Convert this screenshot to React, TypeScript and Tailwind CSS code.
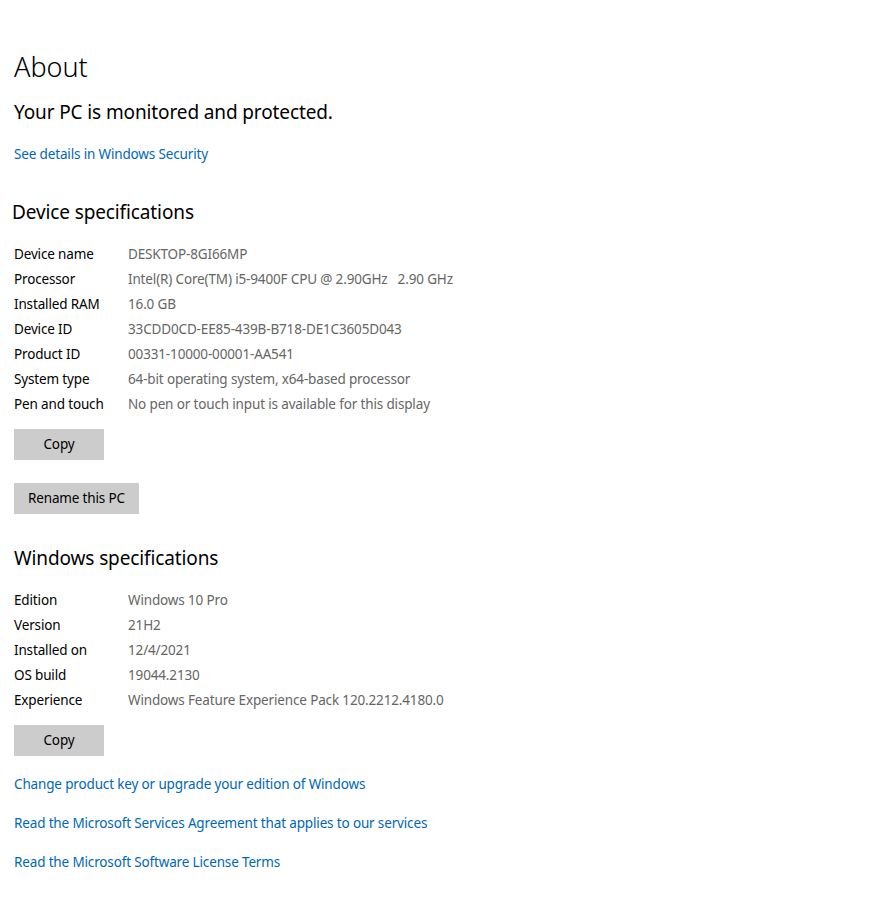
const deviceSpecs = [
  ['Device name', 'DESKTOP-8GI66MP'],
  ['Processor', 'Intel(R) Core(TM) i5-9400F CPU @ 2.90GHz   2.90 GHz'],
  ['Installed RAM', '16.0 GB'],
  ['Device ID', '33CDD0CD-EE85-439B-B718-DE1C3605D043'],
  ['Product ID', '00331-10000-00001-AA541'],
  ['System type', '64-bit operating system, x64-based processor'],
  ['Pen and touch', 'No pen or touch input is available for this display'],
];

const windowsSpecs = [
  ['Edition', 'Windows 10 Pro'],
  ['Version', '21H2'],
  ['Installed on', '12/4/2021'],
  ['OS build', '19044.2130'],
  ['Experience', 'Windows Feature Experience Pack 120.2212.4180.0'],
];

function SpecRows({ rows }: { rows: string[][] }) {
  return (
    <div className="flex flex-col">
      {rows.map(([label, value]) => (
        <div key={label} className="flex h-[25px] items-center text-[13.5px] tracking-[-0.15px]">
          <span className="w-[114px] text-black">{label}</span>
          <span className="whitespace-pre text-[#666666]">{value}</span>
        </div>
      ))}
    </div>
  );
}

function GrayButton({ children, className = '' }: { children: React.ReactNode; className?: string }) {
  return (
    <button className={`h-[31px] bg-[#cccccc] px-[14px] text-[13.5px] tracking-[-0.15px] text-black ${className}`}>
      {children}
    </button>
  );
}

export default function App() {
  return (
    <div
      className="min-h-[902px] w-[880px] bg-white pl-[14px] pt-[47px]"
      style={{ fontFamily: '"Noto Sans", "Open Sans", sans-serif' }}
    >
      <h1 className="text-[27px] font-light leading-[40px] text-black">About</h1>
      <p className="mt-[11px] text-[19px] leading-[28px] tracking-[-0.12px] text-black">
        Your PC is monitored and protected.
      </p>
      <a className="mt-[18px] block text-[13.5px] leading-[20px] tracking-[-0.15px] text-[#0067b8]">
        See details in Windows Security
      </a>

      <h2 className="-ml-[2px] mt-[34px] text-[19px] leading-[28px] tracking-[-0.12px] text-black">
        Device specifications
      </h2>
      <div className="mt-[16px]">
        <SpecRows rows={deviceSpecs} />
      </div>
      <div className="mt-[12px] flex flex-col items-start">
        <GrayButton className="w-[90px]">Copy</GrayButton>
        <GrayButton className="mt-[23px]">Rename this PC</GrayButton>
      </div>

      <h2 className="mt-[30px] text-[19px] leading-[28px] tracking-[-0.12px] text-black">Windows specifications</h2>
      <div className="mt-[16px]">
        <SpecRows rows={windowsSpecs} />
      </div>
      <div className="mt-[12px]">
        <GrayButton className="w-[90px]">Copy</GrayButton>
      </div>

      <div className="mt-[18px] flex flex-col items-start gap-[19px] text-[13.5px] leading-[20px] tracking-[-0.15px] text-[#0067b8]">
        <a>Change product key or upgrade your edition of Windows</a>
        <a>Read the Microsoft Services Agreement that applies to our services</a>
        <a>Read the Microsoft Software License Terms</a>
      </div>
    </div>
  );
}
